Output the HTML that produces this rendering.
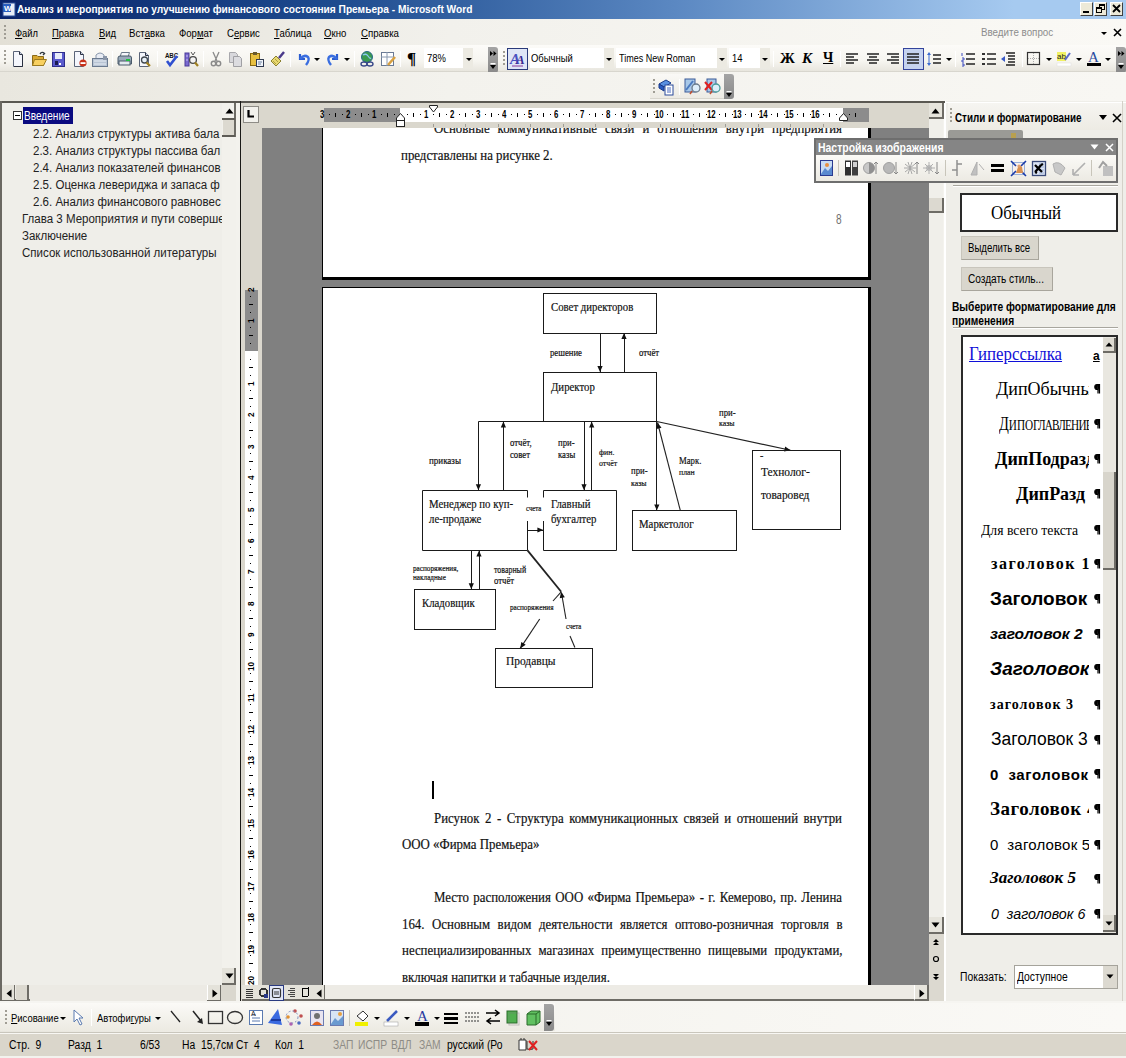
<!DOCTYPE html>
<html><head><meta charset="utf-8">
<style>
*{margin:0;padding:0;box-sizing:border-box}
html,body{width:1126px;height:1058px;overflow:hidden;background:#F4F3EE;font-family:"Liberation Sans",sans-serif;font-size:11px;color:#000}
.a{position:absolute}
.n{white-space:nowrap;transform-origin:0 0;line-height:1}
.s86{transform:scaleX(.86)}
.ser{font-family:"Liberation Serif",serif}
svg{position:absolute;overflow:visible}
.title{left:0;top:0;width:1126px;height:19px;background:linear-gradient(90deg,#0A246A 0%,#1E4C8F 30%,#5B88C2 60%,#A6CAF0 90%,#A6CAF0 100%)}
.menubar{left:0;top:19px;width:1126px;height:26px;background:linear-gradient(90deg,#E3E0D6 0%,#F2F1EC 40%,#FAF9F5 100%)}
.tb1{left:0;top:45px;width:1126px;height:27px;background:linear-gradient(#FCFBF8 0%,#F6F5F0 60%,#E6E4DC 100%)}
.row2{left:0;top:72px;width:1126px;height:29px;background:linear-gradient(90deg,#E9E7DF 0%,#F3F2ED 40%,#F8F7F3 100%)}
.grip{width:2px;height:14px;background:repeating-linear-gradient(#A09D94 0 2px,transparent 2px 4px)}
.vsep{width:1px;background:#C8C5BA;border-right:1px solid #fff}
.dd{width:0;height:0;border-left:3px solid transparent;border-right:3px solid transparent;border-top:3px solid #000}
.chev{background:linear-gradient(#A4A4A4,#8A8A8A);border-radius:0 3px 3px 0}
.combo{background:#fff;height:20px}
.cbtn{background:#ECEAE2;width:10px;height:20px}
</style></head><body>
<!-- TITLE BAR -->
<div class="a title"></div>
<svg style="left:2px;top:2px" width="15" height="15" viewBox="0 0 15 15"><rect x="1" y="1" width="12" height="13" fill="#E8EEF8" stroke="#2A4E9A"/><rect x="1" y="2" width="8" height="8" fill="#2A5FBF"/><text x="2" y="9" font-size="8" font-weight="bold" fill="#fff" font-family="Liberation Sans">W</text></svg>
<div class="a n" style="left:17px;top:4px;color:#fff;font-weight:bold;font-size:11px;transform:scaleX(.925)">Анализ и мероприятия по улучшению финансового состояния Премьера - Microsoft Word</div>
<!-- window buttons -->
<div class="a" style="left:1080px;top:2px;width:13px;height:14px;background:#ECE9D8;border:1px solid;border-color:#fff #404040 #404040 #fff"></div>
<div class="a" style="left:1083px;top:11px;width:6px;height:2px;background:#000"></div>
<div class="a" style="left:1094px;top:2px;width:13px;height:14px;background:#ECE9D8;border:1px solid;border-color:#fff #404040 #404040 #fff"></div>
<div class="a" style="left:1099px;top:4px;width:6px;height:6px;border:1px solid #000;border-top-width:2px"></div>
<div class="a" style="left:1096px;top:7px;width:6px;height:6px;border:1px solid #000;border-top-width:2px;background:#ECE9D8"></div>
<div class="a" style="left:1110px;top:2px;width:13px;height:14px;background:#ECE9D8;border:1px solid;border-color:#fff #404040 #404040 #fff"></div>
<svg style="left:1112px;top:4px" width="9" height="9"><path d="M1 1L8 8M8 1L1 8" stroke="#000" stroke-width="1.8"/></svg>
<!-- MENU BAR -->
<div class="a menubar"></div>
<div class="a grip" style="left:4px;top:25px;height:14px"></div>
<div class="a n" style="left:15px;top:28px;transform:scaleX(.85)"><u>Ф</u>айл</div>
<div class="a n" style="left:52px;top:28px;transform:scaleX(.86)"><u>П</u>равка</div>
<div class="a n" style="left:99px;top:28px;transform:scaleX(.86)"><u>В</u>ид</div>
<div class="a n" style="left:129px;top:28px;transform:scaleX(.88)">Вст<u>а</u>вка</div>
<div class="a n" style="left:179px;top:28px;transform:scaleX(.87)">Фор<u>м</u>ат</div>
<div class="a n" style="left:227px;top:28px;transform:scaleX(.87)">С<u>е</u>рвис</div>
<div class="a n" style="left:274px;top:28px;transform:scaleX(.87)"><u>Т</u>аблица</div>
<div class="a n" style="left:324px;top:28px;transform:scaleX(.87)"><u>О</u>кно</div>
<div class="a n" style="left:361px;top:28px;transform:scaleX(.88)"><u>С</u>правка</div>
<div class="a n" style="left:981px;top:27px;color:#8C8C8C;transform:scaleX(.89)">Введите вопрос</div>
<div class="a dd" style="left:1101px;top:32px"></div>
<svg style="left:1113px;top:28px" width="9" height="9"><path d="M1 1L8 8M8 1L1 8" stroke="#000" stroke-width="1.6"/></svg>
<!-- TOOLBAR ROW 1 -->
<div class="a tb1"></div>
<div class="a" style="left:0;top:71px;width:1126px;height:1px;background:#D8D6CE"></div>
<div class="a grip" style="left:4px;top:50px;height:16px"></div>
<svg style="left:12px;top:51px" width="16" height="16"><path d="M1.5 .5H7.5L10.5 3.5V15.5H1.5Z" fill="#F4F6FC" stroke="#5A6478"/><path d="M7.5 .5V3.5H10.5" fill="#C8D0E0" stroke="#2A3040"/><path d="M10.5 4V15.5H2" stroke="#2A3040" fill="none"/></svg>
<svg style="left:31px;top:51px" width="17" height="16"><path d="M1.5 4.5H6L7 5.5H12.5V14.5H1.5Z" fill="#D8A830" stroke="#8A6A18"/><path d="M3.5 8.5H15.5L12.5 14.5H1.5Z" fill="#F8D060" stroke="#9A7A20"/><path d="M9 3Q11 0 13.5 2.5L12 4" stroke="#303840" fill="none" stroke-width="1.4"/></svg>
<svg style="left:52px;top:51px" width="14" height="16"><rect x=".5" y="1.5" width="12" height="14" fill="#5A5ACC" stroke="#2E2E8A"/><rect x="3" y="2" width="7" height="6" fill="#E8ECFA"/><rect x="3" y="10" width="3" height="4" fill="#1A1A50"/><rect x="7" y="12" width="2" height="2" fill="#fff"/></svg>
<svg style="left:73px;top:51px" width="15" height="16"><path d="M1.5 .5H7.5L10.5 3.5V15.5H1.5Z" fill="#F4F6FC" stroke="#5A6478"/><path d="M7.5 .5V3.5H10.5" fill="#C8D0E0" stroke="#2A3040"/><circle cx="10" cy="12" r="3.6" fill="#C83018"/><rect x="7.5" y="11.2" width="5" height="1.8" fill="#fff"/></svg>
<svg style="left:92px;top:51px" width="16" height="16"><path d="M4 7V4Q8 0 12 4V7" fill="#E8ECF4" stroke="#8A98AC"/><rect x=".5" y="7.5" width="15" height="8" fill="#B8C4D4" stroke="#6A7A90"/><path d="M2 10H14M2 13H14" stroke="#E8EEF6"/><rect x="11" y="5" width="4" height="4" fill="#8A96A8"/></svg>
<div class="a vsep" style="left:112px;top:51px;height:16px"></div>
<svg style="left:117px;top:51px" width="15" height="16"><path d="M4.5 1.5H12.5L11 6H3Z" fill="#F4F6FA" stroke="#6A7888"/><path d="M1 7Q1 5 3 5H13Q14.5 5 14.5 7V13H1Z" fill="#9AAABA" stroke="#4A5A6A"/><rect x="2" y="10" width="11" height="4" fill="#E4EAF0" stroke="#4A5A6A"/><rect x="9" y="8" width="4" height="2" fill="#20C040"/></svg>
<div class="a vsep" style="left:157px;top:51px;height:16px"></div>
<svg style="left:138px;top:51px" width="15" height="16"><path d="M1.5 1.5H7.5L10.5 4.5V15.5H1.5Z" fill="#F4F6FC" stroke="#5A6478"/><path d="M7.5 1.5V4.5H10.5" fill="#C8D0E0" stroke="#2A3040"/><circle cx="6.5" cy="9" r="3" fill="#E8F0F8" stroke="#404850" stroke-width="1.3"/><path d="M8.5 11.5L12 15" stroke="#A08020" stroke-width="2.2"/></svg>
<svg style="left:163px;top:51px" width="16" height="16"><text x="2" y="7" font-size="6.5" font-weight="bold" font-family="Liberation Sans" fill="#111" transform="scale(.95 1)">ABC</text><path d="M4 10L7 14L14 5" stroke="#3050D0" stroke-width="2.6" fill="none"/></svg>
<svg style="left:184px;top:51px" width="15" height="16"><rect x="1" y="2" width="4" height="13" fill="#7A6AD0" stroke="#4A3A98"/><path d="M2 5H4M2 9H4" stroke="#C8C0F0"/><circle cx="9" cy="9" r="3.4" fill="#F4F4F4" stroke="#4A4A4A" stroke-width="1.3"/><path d="M11 11.5L14 15" stroke="#A08020" stroke-width="2.2"/><path d="M7 1L9 4L11 1" stroke="#555" fill="none"/></svg>
<div class="a vsep" style="left:203px;top:51px;height:16px"></div>
<svg style="left:209px;top:51px" width="14" height="16"><path d="M4 1L8 10M10 1L6 10" stroke="#8A8A8A" stroke-width="1.3"/><circle cx="4.5" cy="12.5" r="2.2" fill="none" stroke="#8A8A8A" stroke-width="1.4"/><circle cx="9.5" cy="12.5" r="2.2" fill="none" stroke="#8A8A8A" stroke-width="1.4"/></svg>
<svg style="left:228px;top:51px" width="16" height="16"><path d="M1.5 1.5H7.5L9.5 3.5V11.5H1.5Z" fill="#D8D8DC" stroke="#A8A8AC"/><path d="M5.5 5.5H11.5L13.5 7.5V15.5H5.5Z" fill="#DCDCE0" stroke="#A0A0A4"/></svg>
<svg style="left:249px;top:51px" width="16" height="16"><rect x="1.5" y="2.5" width="9" height="12" fill="#E8C040" stroke="#8A6A10"/><rect x="4" y="1" width="4" height="3" fill="#6A5A30"/><rect x="7.5" y="8.5" width="7" height="7" fill="#F0F4FA" stroke="#303A50"/><path d="M9 11H13M9 13H12" stroke="#6A80A0"/></svg>
<svg style="left:270px;top:51px" width="16" height="16"><path d="M9 7L14 1" stroke="#4A3A8A" stroke-width="2.5"/><path d="M6 5L11 10L6 15L1 10Z" fill="#E8D870" stroke="#8A8030"/><path d="M3 10L6 13M5 8L8 11" stroke="#B0A040"/></svg>
<div class="a vsep" style="left:290px;top:51px;height:16px"></div>
<svg style="left:296px;top:51px" width="16" height="16"><path d="M4 3V8H9" fill="none" stroke="#2A5CD0" stroke-width="2.2"/><path d="M4 8Q8 3 12 6Q14 9 10 14" fill="none" stroke="#3A6EE0" stroke-width="2.4"/></svg>
<div class="a dd" style="left:314px;top:58px"></div>
<svg style="left:325px;top:51px" width="16" height="16"><path d="M12 3V8H7" fill="none" stroke="#2A5CD0" stroke-width="2.2"/><path d="M12 8Q8 3 4 6Q2 9 6 14" fill="none" stroke="#3A6EE0" stroke-width="2.4"/></svg>
<div class="a dd" style="left:344px;top:58px"></div>
<div class="a vsep" style="left:354px;top:51px;height:16px"></div>
<svg style="left:359px;top:51px" width="16" height="16"><circle cx="8" cy="6" r="5.5" fill="#3A9A50" stroke="#2A6A8A"/><path d="M4 4Q7 2 9 5T12 7" fill="none" stroke="#8AC8F0" stroke-width="1.3"/><ellipse cx="5" cy="13" rx="3" ry="2" fill="none" stroke="#3A4A8A" stroke-width="1.4"/><ellipse cx="11" cy="13" rx="3" ry="2" fill="none" stroke="#3A4A8A" stroke-width="1.4"/></svg>
<svg style="left:380px;top:51px" width="16" height="16"><rect x="1.5" y="1.5" width="12" height="13" fill="#fff" stroke="#6A7A94"/><path d="M1 6H14M7 1V15" stroke="#8A9AB0"/><path d="M8 14L15 6" stroke="#D8A040" stroke-width="2.5"/></svg>
<div class="a vsep" style="left:400px;top:51px;height:16px"></div>
<div class="a n ser" style="left:407px;top:50px;font-size:17px;font-weight:bold">¶</div>
<div class="a combo" style="left:424px;top:48px;width:49px"></div>
<div class="a n" style="left:427px;top:53px;transform:scaleX(.86)">78%</div>
<div class="a cbtn" style="left:463px;top:48px"></div>
<div class="a dd" style="left:466px;top:58px"></div>
<div class="a chev" style="left:488px;top:47px;width:10px;height:26px"></div>
<svg style="left:489px;top:49px" width="9" height="22"><path d="M1 2L4 4.5L1 7ZM4.5 2L7.5 4.5L4.5 7Z" fill="#000"/><rect x="1.5" y="14" width="5" height="1.5" fill="#fff"/><path d="M1 16H7L4 20Z" fill="#000"/></svg>
<div class="a grip" style="left:503px;top:51px;height:16px"></div>
<div class="a" style="left:507px;top:48px;width:21px;height:22px;background:#DFE6F6;border:1px solid #2A3A7A"></div>
<svg style="left:509px;top:50px" width="17" height="17"><text x="1" y="14" font-size="15" font-weight="bold" font-style="italic" font-family="Liberation Serif" fill="#4A50C0">A</text><text x="7" y="14" font-size="13" font-weight="bold" font-style="italic" font-family="Liberation Serif" fill="#3A2A90">A</text><path d="M3 16H14" stroke="#8A3A9A"/></svg>
<div class="a combo" style="left:530px;top:48px;width:84px"></div>
<div class="a n" style="left:531px;top:53px;transform:scaleX(.86)">Обычный</div>
<div class="a cbtn" style="left:604px;top:48px"></div>
<div class="a dd" style="left:606px;top:58px"></div>
<div class="a combo" style="left:616px;top:48px;width:111px"></div>
<div class="a n" style="left:619px;top:53px;transform:scaleX(.82)">Times New Roman</div>
<div class="a cbtn" style="left:717px;top:48px"></div>
<div class="a dd" style="left:719px;top:58px"></div>
<div class="a combo" style="left:729px;top:48px;width:41px"></div>
<div class="a n" style="left:732px;top:53px;transform:scaleX(.86)">14</div>
<div class="a cbtn" style="left:760px;top:48px"></div>
<div class="a dd" style="left:762px;top:58px"></div>
<div class="a vsep" style="left:773px;top:51px;height:16px"></div>
<div class="a n ser" style="left:780px;top:51px;font-size:15px;font-weight:bold">Ж</div>
<div class="a n ser" style="left:802px;top:51px;font-size:15px;font-weight:bold;font-style:italic">К</div>
<div class="a n ser" style="left:823px;top:51px;font-size:14px;font-weight:bold;text-decoration:underline">Ч</div>
<div class="a vsep" style="left:840px;top:51px;height:16px"></div>
<svg style="left:845px;top:52px" width="15" height="14"><path d="M1 2H13M1 5H9M1 8H13M1 11H9" stroke="#222" stroke-width="1.6"/></svg>
<svg style="left:866px;top:52px" width="15" height="14"><path d="M1 2H13M3 5H11M1 8H13M3 11H11" stroke="#222" stroke-width="1.6"/></svg>
<svg style="left:886px;top:52px" width="15" height="14"><path d="M1 2H13M5 5H13M1 8H13M5 11H13" stroke="#222" stroke-width="1.6"/></svg>
<div class="a" style="left:903px;top:48px;width:21px;height:22px;background:#C6D3EF;border:1px solid #33449C"></div>
<svg style="left:906px;top:52px" width="15" height="14"><path d="M1 2H13M1 5H13M1 8H13M1 11H13" stroke="#222" stroke-width="1.6"/></svg>
<svg style="left:926px;top:51px" width="17" height="16"><path d="M3 1L1 4H5ZM3 15L1 12H5Z" fill="#3A6AD0"/><path d="M3 3V13" stroke="#3A6AD0"/><path d="M7 4H15M7 8H15M7 12H15" stroke="#222" stroke-width="1.6"/></svg>
<div class="a dd" style="left:946px;top:58px"></div>
<div class="a vsep" style="left:955px;top:51px;height:16px"></div>
<svg style="left:960px;top:51px" width="16" height="16"><path d="M2 2V5M2 7H4V9H2V11H4M2 13H4V15H2" stroke="#3A4AC0" fill="none"/><path d="M6 3H15M6 8H15M6 13H15" stroke="#222" stroke-width="1.6"/></svg>
<svg style="left:981px;top:51px" width="16" height="16"><rect x="1" y="2" width="3" height="2" fill="#333"/><rect x="1" y="7" width="3" height="2" fill="#333"/><rect x="1" y="12" width="3" height="2" fill="#333"/><path d="M6 3H15M6 8H15M6 13H15" stroke="#222" stroke-width="1.6"/></svg>
<svg style="left:1000px;top:51px" width="16" height="16"><path d="M6 2H15M8 5H15M8 8H15M8 11H15M6 14H15" stroke="#222" stroke-width="1.5"/><path d="M1 8L5 5V11Z" fill="#3A5AC8"/></svg>
<div class="a vsep" style="left:1022px;top:51px;height:16px"></div>
<svg style="left:1027px;top:52px" width="14" height="14"><rect x=".5" y=".5" width="12" height="12" fill="none" stroke="#333" stroke-width="1.2"/><path d="M6.5 1V13M1 6.5H13" stroke="#AAA" stroke-dasharray="1 1"/></svg>
<div class="a dd" style="left:1046px;top:58px"></div>
<svg style="left:1056px;top:50px" width="16" height="18"><rect x="1" y="2" width="9" height="9" fill="#F0F040" opacity=".8"/><text x="1" y="9" font-size="8" font-family="Liberation Sans" fill="#222">ab</text><path d="M9 10L14 3" stroke="#5A6AC8" stroke-width="2"/><rect x="1" y="13" width="14" height="3" fill="#fff" stroke="#ddd" stroke-width=".5"/></svg>
<div class="a dd" style="left:1076px;top:58px"></div>
<svg style="left:1086px;top:50px" width="16" height="18"><text x="2" y="12" font-size="15" font-family="Liberation Serif" fill="#2A4AA0">A</text><rect x="1" y="13" width="14" height="3" fill="#000"/></svg>
<div class="a dd" style="left:1105px;top:58px"></div>
<div class="a chev" style="left:1116px;top:47px;width:10px;height:26px"></div>
<svg style="left:1117px;top:49px" width="9" height="22"><path d="M1 2L4 4.5L1 7ZM4.5 2L7.5 4.5L4.5 7Z" fill="#000"/><rect x="1.5" y="14" width="5" height="1.5" fill="#fff"/><path d="M1 16H7L4 20Z" fill="#000"/></svg>

<!-- ROW 2 -->
<div class="a row2"></div>
<div class="a" style="left:650px;top:74px;width:76px;height:25px;background:linear-gradient(#FAF9F6,#EDEBE4);border-bottom:1px solid #D8D6CE"></div>
<div class="a grip" style="left:653px;top:79px;height:14px"></div>
<svg style="left:658px;top:78px" width="16" height="18"><path d="M1 6L8 2L13 5L6 9Z" fill="#5A90E0" stroke="#1A3A8A"/><path d="M1 6V10L6 13V9Z" fill="#2A5AC0" stroke="#1A3A8A"/><rect x="7" y="7" width="8" height="10" fill="#fff" stroke="#2A4A9A"/><path d="M9 10H13M9 12H13M9 14H13" stroke="#4A6AC0"/></svg>
<div class="a vsep" style="left:679px;top:79px;height:16px"></div>
<svg style="left:684px;top:78px" width="17" height="18"><rect x="1" y="1" width="10" height="13" fill="#A8C8E8" stroke="#3A5A98"/><path d="M2 12L9 3" stroke="#4A7AC0" stroke-width="2"/><circle cx="12" cy="10" r="4" fill="#DDEEFA" stroke="#6A7A8A" stroke-width="1.3"/><path d="M6 16L8 13" stroke="#C05030" stroke-width="1.5"/></svg>
<svg style="left:704px;top:78px" width="17" height="18"><rect x="3" y="1" width="9" height="13" fill="#A8C8E8" stroke="#3A5A98"/><path d="M1 4L8 12M8 4L1 12" stroke="#E02020" stroke-width="2"/><circle cx="12" cy="10" r="4" fill="#DDEEFA" stroke="#4A9A9A" stroke-width="1.3"/><path d="M6 16L8 13" stroke="#C05030" stroke-width="1.5"/></svg>
<div class="a chev" style="left:724px;top:74px;width:10px;height:25px"></div>
<svg style="left:725px;top:76px" width="9" height="22"><rect x="1.5" y="15" width="5" height="1" fill="#fff"/><path d="M1 17H7L4 21Z" fill="#000"/></svg>

<!-- PANE FRAME -->
<div class="a" style="left:0;top:101px;width:945px;height:2px;background:#5A5852"></div>
<div class="a" style="left:0;top:103px;width:236px;height:898px;background:#EFEEE9"></div>
<div class="a" style="left:0;top:101px;width:2px;height:900px;background:#6A6862"></div>
<div class="a" style="left:236px;top:103px;width:4px;height:898px;background:#F3F2ED"></div>
<div class="a" style="left:240px;top:101px;width:1px;height:900px;background:#1A1916"></div><div class="a" style="left:241px;top:103px;width:1px;height:898px;background:#DCD9D0"></div>
<!-- left pane scrollbar -->
<div class="a" style="left:222px;top:103px;width:14px;height:882px;background:#F2F1EC"></div>
<div class="a" style="left:234px;top:103px;width:2px;height:34px;background:#6E6C66"></div>
<svg style="left:225px;top:108px" width="9" height="6"><path d="M0.5 5.5L4.5 0.5L8.5 5.5Z" fill="#000"/></svg>
<div class="a" style="left:222px;top:118px;width:13px;height:2px;background:#5E5C56"></div>
<div class="a" style="left:223px;top:120px;width:11px;height:16px;background:#DCD9D0"></div>
<div class="a" style="left:222px;top:135px;width:13px;height:2px;background:#5E5C56"></div>
<div class="a" style="left:222px;top:968px;width:14px;height:17px;background:#E4E2DA;border-right:2px solid #6E6C66;border-bottom:2px solid #6E6C66"></div>
<svg style="left:225px;top:973px" width="9" height="6"><path d="M0.5 .5L4.5 5.5L8.5 .5Z" fill="#000"/></svg>
<!-- left pane h scrollbar -->
<div class="a" style="left:2px;top:985px;width:234px;height:16px;background:#ECEAE4"></div>
<div class="a" style="left:2px;top:999px;width:28px;height:2px;background:#6E6C66"></div><div class="a" style="left:207px;top:999px;width:15px;height:2px;background:#6E6C66"></div>
<div class="a" style="left:2px;top:985px;width:13px;height:15px;background:#E4E2DA;border-right:1px solid #6E6C66"></div>
<svg style="left:6px;top:989px" width="6" height="9"><path d="M5.5 .5L.5 4.5L5.5 8.5Z" fill="#000"/></svg>
<div class="a" style="left:16px;top:985px;width:13px;height:15px;background:#DCD9D0;border-right:2px solid #6E6C66"></div>
<div class="a" style="left:207px;top:985px;width:15px;height:15px;background:#E4E2DA;border-left:1px solid #fff;border-right:2px solid #6E6C66"></div>
<svg style="left:212px;top:989px" width="6" height="9"><path d="M.5 .5L5.5 4.5L.5 8.5Z" fill="#000"/></svg>
<div class="a" style="left:221px;top:985px;width:15px;height:16px;background:#DAD7CE"></div>
<!-- document map text -->
<div class="a" style="left:13px;top:111px;width:9px;height:9px;border:1px solid #333;background:#fff"></div>
<div class="a" style="left:15px;top:115px;width:5px;height:1px;background:#000"></div>
<div class="a" style="left:23px;top:107px;width:50px;height:17px;background:#0A0A80"></div>
<div class="a n" style="left:24px;top:110px;font-size:12px;color:#fff;transform:scaleX(.84)">Введение</div>
<div class="a" style="left:20px;top:126px;width:202px;height:140px;overflow:hidden">
<div class="a n" style="left:13px;top:2px;font-size:12px;color:#222;transform:scaleX(.96)">2.2. Анализ структуры актива бала</div>
<div class="a n" style="left:13px;top:19px;font-size:12px;color:#222;transform:scaleX(.96)">2.3. Анализ структуры пассива бал</div>
<div class="a n" style="left:13px;top:36px;font-size:12px;color:#222;transform:scaleX(.96)">2.4. Анализ показателей финансов</div>
<div class="a n" style="left:13px;top:53px;font-size:12px;color:#222;transform:scaleX(.96)">2.5. Оценка левериджа и запаса ф</div>
<div class="a n" style="left:13px;top:70px;font-size:12px;color:#222;transform:scaleX(.96)">2.6. Анализ финансового равновес</div>
<div class="a n" style="left:2px;top:87px;font-size:12px;color:#222;transform:scaleX(.96)">Глава 3 Мероприятия и пути соверше</div>
<div class="a n" style="left:2px;top:104px;font-size:12px;color:#222;transform:scaleX(.96)">Заключение</div>
<div class="a n" style="left:2px;top:121px;font-size:12px;color:#222;transform:scaleX(.96)">Список использованной литературы</div>
</div>
<!-- ruler corner tab selector -->
<div class="a" style="left:242px;top:103px;width:20px;height:25px;background:#DAD7CD"></div>
<!-- DOC AREA -->
<div class="a" style="left:262px;top:128px;width:667px;height:857px;background:#808080"></div>
<!-- page 1 -->
<div class="a" style="left:322px;top:128px;width:549px;height:152px;background:#000"></div>
<div class="a" style="left:323px;top:128px;width:545px;height:149px;background:#fff"></div>
<!-- page 2 -->
<div class="a" style="left:322px;top:287px;width:549px;height:698px;background:#000"></div>
<div class="a" style="left:323px;top:288px;width:545px;height:697px;background:#fff"></div>
<!--PAGESTART--><div class="a" style="left:323px;top:128px;width:545px;height:149px;overflow:hidden">
<div class="a ser" style="left:111px;top:-6.6px;width:476.1px;font-size:15px;line-height:15px;height:15px;color:#111;-webkit-text-stroke:.2px #111;text-align:justify;text-align-last:justify;white-space:nowrap;transform:scaleX(0.857);transform-origin:0 0;">Основные&nbsp; коммуникативные&nbsp; связи&nbsp; и&nbsp; отношения&nbsp; внутри&nbsp; предприятия</div>
<div class="a ser n" style="left:78px;top:20.3px;font-size:15px;line-height:15px;color:#111;-webkit-text-stroke:.2px #111;transform:scaleX(0.857);">представлены на рисунке 2.</div>
<div class="a n" style="left:513px;top:84px;font-size:14px;line-height:14px;color:#707070;transform:scaleX(.72)">8</div>
</div>
<div class="a ser" style="left:434px;top:810.6px;width:476.1px;font-size:15px;line-height:15px;height:15px;color:#111;-webkit-text-stroke:.2px #111;text-align:justify;text-align-last:justify;white-space:nowrap;transform:scaleX(0.857);transform-origin:0 0;">Рисунок 2 - Структура коммуникационных связей и отношений внутри</div>
<div class="a ser n" style="left:401.5px;top:837.2px;font-size:15px;line-height:15px;color:#111;-webkit-text-stroke:.2px #111;transform:scaleX(0.857);">ООО «Фирма Премьера»</div>
<div class="a ser" style="left:434px;top:890.0px;width:476.1px;font-size:15px;line-height:15px;height:15px;color:#111;-webkit-text-stroke:.2px #111;text-align:justify;text-align-last:justify;white-space:nowrap;transform:scaleX(0.857);transform-origin:0 0;">Место расположения ООО «Фирма Премьера» - г. Кемерово, пр. Ленина</div>
<div class="a ser" style="left:401.5px;top:916.6px;width:514.0px;font-size:15px;line-height:15px;height:15px;color:#111;-webkit-text-stroke:.2px #111;text-align:justify;text-align-last:justify;white-space:nowrap;transform:scaleX(0.857);transform-origin:0 0;">164.&nbsp; Основным&nbsp; видом&nbsp; деятельности&nbsp; является&nbsp; оптово-розничная&nbsp; торговля&nbsp; в</div>
<div class="a ser" style="left:401.5px;top:942.9px;width:514.0px;font-size:15px;line-height:15px;height:15px;color:#111;-webkit-text-stroke:.2px #111;text-align:justify;text-align-last:justify;white-space:nowrap;transform:scaleX(0.857);transform-origin:0 0;">неспециализированных&nbsp; магазинах&nbsp; преимущественно&nbsp; пищевыми&nbsp; продуктами,</div>
<div class="a ser n" style="left:401.5px;top:969.6px;font-size:15px;line-height:15px;color:#111;-webkit-text-stroke:.2px #111;transform:scaleX(0.857);">включая напитки и табачные изделия.</div>
<div class="a" style="left:432px;top:781px;width:2px;height:18px;background:#000"></div>
<svg style="left:0;top:0" width="1126" height="1058"><rect x="543.5" y="293.5" width="113.0" height="40.0" fill="none" stroke="#1A1A1A" stroke-width="1"/><path d="M600.5 333.5L600.5 372.5" stroke="#1A1A1A" stroke-width="1" fill="none"/><path d="M600.0 372.0L597.4 366.0L602.6 366.0Z" fill="#111"/><path d="M624.5 372.5L624.5 333.5" stroke="#1A1A1A" stroke-width="1" fill="none"/><path d="M624.0 333.0L626.6 339.0L621.4 339.0Z" fill="#111"/><rect x="543.5" y="372.5" width="113.0" height="49.0" fill="none" stroke="#1A1A1A" stroke-width="1"/><path d="M478.5 421.5L656.5 421.5" stroke="#1A1A1A" stroke-width="1" fill="none"/><path d="M478.5 421.5L478.5 490.5" stroke="#1A1A1A" stroke-width="1" fill="none"/><path d="M478.4 490.3L475.8 484.3L481.0 484.3Z" fill="#111"/><path d="M503.5 490.5L503.5 421.5" stroke="#1A1A1A" stroke-width="1" fill="none"/><path d="M503.4 421.5L506.0 427.5L500.8 427.5Z" fill="#111"/><path d="M584.5 421.5L584.5 490.5" stroke="#1A1A1A" stroke-width="1" fill="none"/><path d="M584.0 490.3L581.4 484.3L586.6 484.3Z" fill="#111"/><path d="M591.5 490.5L591.5 421.5" stroke="#1A1A1A" stroke-width="1" fill="none"/><path d="M591.7 421.5L594.3 427.5L589.1 427.5Z" fill="#111"/><path d="M656.5 421.5L656.5 510.5" stroke="#1A1A1A" stroke-width="1" fill="none"/><path d="M656.8 510.4L654.2 504.4L659.4 504.4Z" fill="#111"/><path d="M680.3 510.4L657.5 422.5" stroke="#222" stroke-width="1.1" fill="none"/><path d="M657.5 422.5L661.5 427.7L656.5 429.0Z" fill="#111"/><path d="M656.8 421.5L790.5 450.3" stroke="#222" stroke-width="1.1" fill="none"/><path d="M790.5 450.3L784.1 451.6L785.2 446.5Z" fill="#111"/><path d="M527.5 497.5V490.5H422.5V550.5H527.5V521" stroke="#1A1A1A" stroke-width="1" fill="none"/><path d="M543.5 497.5V490.5H616.5V550.5H543.5V521" stroke="#1A1A1A" stroke-width="1" fill="none"/><path d="M527.5 530.5L543.5 530.5" stroke="#1A1A1A" stroke-width="1" fill="none"/><path d="M543.4 530.0L537.4 532.6L537.4 527.4Z" fill="#111"/><rect x="632.5" y="510.5" width="104.0" height="40.0" fill="none" stroke="#1A1A1A" stroke-width="1"/><rect x="752.5" y="450.5" width="88.0" height="79.0" fill="none" stroke="#1A1A1A" stroke-width="1"/><path d="M471.5 550.5L471.5 589.5" stroke="#1A1A1A" stroke-width="1" fill="none"/><path d="M471.3 589.2L468.7 583.2L473.9 583.2Z" fill="#111"/><path d="M479.5 589.5L479.5 550.5" stroke="#1A1A1A" stroke-width="1" fill="none"/><path d="M479.0 550.4L481.6 556.4L476.4 556.4Z" fill="#111"/><rect x="414.5" y="589.5" width="81.0" height="40.0" fill="none" stroke="#1A1A1A" stroke-width="1"/><path d="M527.5 550.4L561.2 591.8" stroke="#222" stroke-width="1.8" fill="none"/><path d="M574.9 647.5L570 636" stroke="#222" stroke-width="1.1" fill="none"/><path d="M566 619L561.5 593" stroke="#222" stroke-width="1.1" fill="none"/><path d="M561.2 591.8L564.8 597.3L559.7 598.2Z" fill="#111"/><path d="M561.2 591.8L553 601" stroke="#222" stroke-width="1.1" fill="none"/><path d="M539.7 619L520.2 648.4" stroke="#222" stroke-width="1.1" fill="none"/><path d="M520.2 648.4L521.3 642.0L525.7 644.8Z" fill="#111"/><rect x="495.5" y="648.5" width="97.0" height="39.0" fill="none" stroke="#1A1A1A" stroke-width="1"/></svg>
<div class="a ser n" style="left:550.6px;top:299.5px;font-size:13px;line-height:13px;color:#111;-webkit-text-stroke:.2px #111;transform:scaleX(0.83);">Совет директоров</div>
<div class="a ser n" style="left:550.6px;top:379.6px;font-size:13px;line-height:13px;color:#111;-webkit-text-stroke:.2px #111;transform:scaleX(0.83);">Директор</div>
<div class="a ser n" style="left:429px;top:496.6px;font-size:13px;line-height:13px;color:#111;-webkit-text-stroke:.2px #111;transform:scaleX(0.83);">Менеджер по куп-</div>
<div class="a ser n" style="left:429px;top:512.1px;font-size:13px;line-height:13px;color:#111;-webkit-text-stroke:.2px #111;transform:scaleX(0.83);">ле-продаже</div>
<div class="a ser n" style="left:551px;top:496.6px;font-size:13px;line-height:13px;color:#111;-webkit-text-stroke:.2px #111;transform:scaleX(0.83);">Главный</div>
<div class="a ser n" style="left:551px;top:512.1px;font-size:13px;line-height:13px;color:#111;-webkit-text-stroke:.2px #111;transform:scaleX(0.83);">бухгалтер</div>
<div class="a ser n" style="left:639px;top:516.9px;font-size:13px;line-height:13px;color:#111;-webkit-text-stroke:.2px #111;transform:scaleX(0.83);">Маркетолог</div>
<div class="a ser n" style="left:761px;top:464.8px;font-size:13px;line-height:13px;color:#111;-webkit-text-stroke:.2px #111;transform:scaleX(0.88);">Технолог-</div>
<div class="a ser n" style="left:761px;top:488.3px;font-size:13px;line-height:13px;color:#111;-webkit-text-stroke:.2px #111;transform:scaleX(0.88);">товаровед</div>
<div class="a ser n" style="left:421.7px;top:595.5px;font-size:13px;line-height:13px;color:#111;-webkit-text-stroke:.2px #111;transform:scaleX(0.83);">Кладовщик</div>
<div class="a ser n" style="left:506px;top:654.1px;font-size:13px;line-height:13px;color:#111;-webkit-text-stroke:.2px #111;transform:scaleX(0.88);">Продавцы</div>
<div class="a ser n" style="left:760px;top:450.6px;font-size:10px;line-height:10px;color:#111;-webkit-text-stroke:.2px #111;transform:scaleX(1);">-</div>
<div class="a ser n" style="left:550px;top:347.6px;font-size:10px;line-height:10px;color:#111;-webkit-text-stroke:.2px #111;transform:scaleX(0.87);">решение</div>
<div class="a ser n" style="left:639px;top:347.6px;font-size:10px;line-height:10px;color:#111;-webkit-text-stroke:.2px #111;transform:scaleX(0.87);">отчёт</div>
<div class="a ser n" style="left:429px;top:456.1px;font-size:10px;line-height:10px;color:#111;-webkit-text-stroke:.2px #111;transform:scaleX(0.9);">приказы</div>
<div class="a ser n" style="left:509.6px;top:437.6px;font-size:10px;line-height:10px;color:#111;-webkit-text-stroke:.2px #111;transform:scaleX(0.87);">отчёт,</div>
<div class="a ser n" style="left:509.6px;top:450.2px;font-size:10px;line-height:10px;color:#111;-webkit-text-stroke:.2px #111;transform:scaleX(0.87);">совет</div>
<div class="a ser n" style="left:558px;top:437.6px;font-size:10px;line-height:10px;color:#111;-webkit-text-stroke:.2px #111;transform:scaleX(0.87);">при-</div>
<div class="a ser n" style="left:558px;top:450.2px;font-size:10px;line-height:10px;color:#111;-webkit-text-stroke:.2px #111;transform:scaleX(0.87);">казы</div>
<div class="a ser n" style="left:598.6px;top:448.2px;font-size:9px;line-height:9px;color:#111;-webkit-text-stroke:.2px #111;transform:scaleX(0.87);">фин.</div>
<div class="a ser n" style="left:598.6px;top:458.9px;font-size:9px;line-height:9px;color:#111;-webkit-text-stroke:.2px #111;transform:scaleX(0.87);">отчёт</div>
<div class="a ser n" style="left:719px;top:408.0px;font-size:10px;line-height:10px;color:#111;-webkit-text-stroke:.2px #111;transform:scaleX(0.87);">при-</div>
<div class="a ser n" style="left:719px;top:419.2px;font-size:9px;line-height:9px;color:#111;-webkit-text-stroke:.2px #111;transform:scaleX(0.87);">казы</div>
<div class="a ser n" style="left:630.6px;top:466.2px;font-size:10px;line-height:10px;color:#111;-webkit-text-stroke:.2px #111;transform:scaleX(0.87);">при-</div>
<div class="a ser n" style="left:630.6px;top:478.5px;font-size:9px;line-height:9px;color:#111;-webkit-text-stroke:.2px #111;transform:scaleX(0.87);">казы</div>
<div class="a ser n" style="left:679px;top:456.0px;font-size:10px;line-height:10px;color:#111;-webkit-text-stroke:.2px #111;transform:scaleX(0.87);">Марк.</div>
<div class="a ser n" style="left:679px;top:468.2px;font-size:9px;line-height:9px;color:#111;-webkit-text-stroke:.2px #111;transform:scaleX(0.87);">план</div>
<div class="a ser n" style="left:413px;top:565.3px;font-size:8px;line-height:8px;color:#111;-webkit-text-stroke:.2px #111;transform:scaleX(0.9);">распоряжения,</div>
<div class="a ser n" style="left:413px;top:574.3px;font-size:8px;line-height:8px;color:#111;-webkit-text-stroke:.2px #111;transform:scaleX(0.9);">накладные</div>
<div class="a ser n" style="left:494px;top:564.6px;font-size:10px;line-height:10px;color:#111;-webkit-text-stroke:.2px #111;transform:scaleX(0.79);">товарный</div>
<div class="a ser n" style="left:494px;top:575.6px;font-size:10px;line-height:10px;color:#111;-webkit-text-stroke:.2px #111;transform:scaleX(0.87);">отчёт</div>
<div class="a ser n" style="left:526px;top:505.3px;font-size:8px;line-height:8px;color:#111;-webkit-text-stroke:.2px #111;transform:scaleX(0.85);">счета</div>
<div class="a ser n" style="left:510px;top:603.6px;font-size:8px;line-height:8px;color:#111;-webkit-text-stroke:.2px #111;transform:scaleX(0.9);">распоряжения</div>
<div class="a ser n" style="left:566px;top:623.3px;font-size:8px;line-height:8px;color:#111;-webkit-text-stroke:.2px #111;transform:scaleX(0.85);">счета</div><!--PAGEEND-->
<div class="a" style="left:242px;top:103px;width:687px;height:25px;background:#DAD7CD"></div>
<div class="a" style="left:324px;top:108px;width:76px;height:14px;background:#8C8C8C"></div>
<div class="a" style="left:400px;top:108px;width:443px;height:14px;background:#fff"></div>
<div class="a" style="left:843px;top:108px;width:26px;height:14px;background:#8C8C8C"></div>
<div class="a n" style="left:319.8px;top:110px;font-size:10px;font-weight:bold;color:#000;transform:scaleX(.78)">3</div>
<div class="a" style="left:328.5px;top:114px;width:1px;height:1px;background:#000"></div>
<div class="a" style="left:335.0px;top:113px;width:1px;height:4px;background:#000"></div>
<div class="a" style="left:341.5px;top:114px;width:1px;height:1px;background:#000"></div>
<div class="a n" style="left:345.8px;top:110px;font-size:10px;font-weight:bold;color:#000;transform:scaleX(.78)">2</div>
<div class="a" style="left:354.5px;top:114px;width:1px;height:1px;background:#000"></div>
<div class="a" style="left:361.0px;top:113px;width:1px;height:4px;background:#000"></div>
<div class="a" style="left:367.5px;top:114px;width:1px;height:1px;background:#000"></div>
<div class="a n" style="left:371.8px;top:110px;font-size:10px;font-weight:bold;color:#000;transform:scaleX(.78)">1</div>
<div class="a" style="left:380.5px;top:114px;width:1px;height:1px;background:#000"></div>
<div class="a" style="left:387.0px;top:113px;width:1px;height:4px;background:#000"></div>
<div class="a" style="left:393.5px;top:114px;width:1px;height:1px;background:#000"></div>
<div class="a" style="left:406.5px;top:114px;width:1px;height:1px;background:#000"></div>
<div class="a" style="left:413.0px;top:113px;width:1px;height:4px;background:#000"></div>
<div class="a" style="left:419.5px;top:114px;width:1px;height:1px;background:#000"></div>
<div class="a n" style="left:423.8px;top:110px;font-size:10px;font-weight:bold;color:#000;transform:scaleX(.78)">1</div>
<div class="a" style="left:432.5px;top:114px;width:1px;height:1px;background:#000"></div>
<div class="a" style="left:439.0px;top:113px;width:1px;height:4px;background:#000"></div>
<div class="a" style="left:445.5px;top:114px;width:1px;height:1px;background:#000"></div>
<div class="a n" style="left:449.8px;top:110px;font-size:10px;font-weight:bold;color:#000;transform:scaleX(.78)">2</div>
<div class="a" style="left:458.5px;top:114px;width:1px;height:1px;background:#000"></div>
<div class="a" style="left:465.0px;top:113px;width:1px;height:4px;background:#000"></div>
<div class="a" style="left:471.5px;top:114px;width:1px;height:1px;background:#000"></div>
<div class="a n" style="left:475.8px;top:110px;font-size:10px;font-weight:bold;color:#000;transform:scaleX(.78)">3</div>
<div class="a" style="left:484.5px;top:114px;width:1px;height:1px;background:#000"></div>
<div class="a" style="left:491.0px;top:113px;width:1px;height:4px;background:#000"></div>
<div class="a" style="left:497.5px;top:114px;width:1px;height:1px;background:#000"></div>
<div class="a n" style="left:501.8px;top:110px;font-size:10px;font-weight:bold;color:#000;transform:scaleX(.78)">4</div>
<div class="a" style="left:510.5px;top:114px;width:1px;height:1px;background:#000"></div>
<div class="a" style="left:517.0px;top:113px;width:1px;height:4px;background:#000"></div>
<div class="a" style="left:523.5px;top:114px;width:1px;height:1px;background:#000"></div>
<div class="a n" style="left:527.8px;top:110px;font-size:10px;font-weight:bold;color:#000;transform:scaleX(.78)">5</div>
<div class="a" style="left:536.5px;top:114px;width:1px;height:1px;background:#000"></div>
<div class="a" style="left:543.0px;top:113px;width:1px;height:4px;background:#000"></div>
<div class="a" style="left:549.5px;top:114px;width:1px;height:1px;background:#000"></div>
<div class="a n" style="left:553.8px;top:110px;font-size:10px;font-weight:bold;color:#000;transform:scaleX(.78)">6</div>
<div class="a" style="left:562.5px;top:114px;width:1px;height:1px;background:#000"></div>
<div class="a" style="left:569.0px;top:113px;width:1px;height:4px;background:#000"></div>
<div class="a" style="left:575.5px;top:114px;width:1px;height:1px;background:#000"></div>
<div class="a n" style="left:579.8px;top:110px;font-size:10px;font-weight:bold;color:#000;transform:scaleX(.78)">7</div>
<div class="a" style="left:588.5px;top:114px;width:1px;height:1px;background:#000"></div>
<div class="a" style="left:595.0px;top:113px;width:1px;height:4px;background:#000"></div>
<div class="a" style="left:601.5px;top:114px;width:1px;height:1px;background:#000"></div>
<div class="a n" style="left:605.8px;top:110px;font-size:10px;font-weight:bold;color:#000;transform:scaleX(.78)">8</div>
<div class="a" style="left:614.5px;top:114px;width:1px;height:1px;background:#000"></div>
<div class="a" style="left:621.0px;top:113px;width:1px;height:4px;background:#000"></div>
<div class="a" style="left:627.5px;top:114px;width:1px;height:1px;background:#000"></div>
<div class="a n" style="left:631.8px;top:110px;font-size:10px;font-weight:bold;color:#000;transform:scaleX(.78)">9</div>
<div class="a" style="left:640.5px;top:114px;width:1px;height:1px;background:#000"></div>
<div class="a" style="left:647.0px;top:113px;width:1px;height:4px;background:#000"></div>
<div class="a" style="left:653.5px;top:114px;width:1px;height:1px;background:#000"></div>
<div class="a n" style="left:655.2px;top:110px;font-size:10px;font-weight:bold;color:#000;transform:scaleX(.78)">10</div>
<div class="a" style="left:666.5px;top:114px;width:1px;height:1px;background:#000"></div>
<div class="a" style="left:673.0px;top:113px;width:1px;height:4px;background:#000"></div>
<div class="a" style="left:679.5px;top:114px;width:1px;height:1px;background:#000"></div>
<div class="a n" style="left:681.2px;top:110px;font-size:10px;font-weight:bold;color:#000;transform:scaleX(.78)">11</div>
<div class="a" style="left:692.5px;top:114px;width:1px;height:1px;background:#000"></div>
<div class="a" style="left:699.0px;top:113px;width:1px;height:4px;background:#000"></div>
<div class="a" style="left:705.5px;top:114px;width:1px;height:1px;background:#000"></div>
<div class="a n" style="left:707.2px;top:110px;font-size:10px;font-weight:bold;color:#000;transform:scaleX(.78)">12</div>
<div class="a" style="left:718.5px;top:114px;width:1px;height:1px;background:#000"></div>
<div class="a" style="left:725.0px;top:113px;width:1px;height:4px;background:#000"></div>
<div class="a" style="left:731.5px;top:114px;width:1px;height:1px;background:#000"></div>
<div class="a n" style="left:733.2px;top:110px;font-size:10px;font-weight:bold;color:#000;transform:scaleX(.78)">13</div>
<div class="a" style="left:744.5px;top:114px;width:1px;height:1px;background:#000"></div>
<div class="a" style="left:751.0px;top:113px;width:1px;height:4px;background:#000"></div>
<div class="a" style="left:757.5px;top:114px;width:1px;height:1px;background:#000"></div>
<div class="a n" style="left:759.2px;top:110px;font-size:10px;font-weight:bold;color:#000;transform:scaleX(.78)">14</div>
<div class="a" style="left:770.5px;top:114px;width:1px;height:1px;background:#000"></div>
<div class="a" style="left:777.0px;top:113px;width:1px;height:4px;background:#000"></div>
<div class="a" style="left:783.5px;top:114px;width:1px;height:1px;background:#000"></div>
<div class="a n" style="left:785.2px;top:110px;font-size:10px;font-weight:bold;color:#000;transform:scaleX(.78)">15</div>
<div class="a" style="left:796.5px;top:114px;width:1px;height:1px;background:#000"></div>
<div class="a" style="left:803.0px;top:113px;width:1px;height:4px;background:#000"></div>
<div class="a" style="left:809.5px;top:114px;width:1px;height:1px;background:#000"></div>
<div class="a n" style="left:811.2px;top:110px;font-size:10px;font-weight:bold;color:#000;transform:scaleX(.78)">16</div>
<div class="a" style="left:822.5px;top:114px;width:1px;height:1px;background:#000"></div>
<div class="a" style="left:829.0px;top:113px;width:1px;height:4px;background:#000"></div>
<div class="a" style="left:835.5px;top:114px;width:1px;height:1px;background:#000"></div>

<div class="a" style="left:848.5px;top:114px;width:1px;height:1px;background:#000"></div>
<div class="a" style="left:855.0px;top:113px;width:1px;height:4px;background:#000"></div>
<div class="a" style="left:432.5px;top:124px;width:1px;height:3px;background:#A09E96"></div>
<div class="a" style="left:465.0px;top:124px;width:1px;height:3px;background:#A09E96"></div>
<div class="a" style="left:497.5px;top:124px;width:1px;height:3px;background:#A09E96"></div>
<div class="a" style="left:530.0px;top:124px;width:1px;height:3px;background:#A09E96"></div>
<div class="a" style="left:562.5px;top:124px;width:1px;height:3px;background:#A09E96"></div>
<div class="a" style="left:595.0px;top:124px;width:1px;height:3px;background:#A09E96"></div>
<div class="a" style="left:627.5px;top:124px;width:1px;height:3px;background:#A09E96"></div>
<div class="a" style="left:660.0px;top:124px;width:1px;height:3px;background:#A09E96"></div>
<div class="a" style="left:692.5px;top:124px;width:1px;height:3px;background:#A09E96"></div>
<div class="a" style="left:725.0px;top:124px;width:1px;height:3px;background:#A09E96"></div>
<div class="a" style="left:757.5px;top:124px;width:1px;height:3px;background:#A09E96"></div>
<div class="a" style="left:790.0px;top:124px;width:1px;height:3px;background:#A09E96"></div>
<div class="a" style="left:822.5px;top:124px;width:1px;height:3px;background:#A09E96"></div>
<svg style="left:395px;top:104px" width="50" height="25"><path d="M34.5 1.5H42.5V3L38.5 8L34.5 3Z" fill="#fff" stroke="#222"/><path d="M1.5 16.5V14L5.5 9.5L9.5 14V16.5Z" fill="#fff" stroke="#222"/><rect x="1.5" y="16.5" width="8" height="6" fill="#fff" stroke="#222"/></svg>
<svg style="left:838px;top:112px" width="12" height="10"><path d="M1.5 8.5V6L5.5 1.5L9.5 6V8.5Z" fill="#fff" stroke="#222"/></svg>
<div class="a" style="left:243px;top:106px;width:16px;height:17px;background:#F2F1EC;border:1px solid #8E8C86"></div>
<svg style="left:247px;top:110px" width="8" height="8"><path d="M1.5 0V6.5H7" stroke="#000" stroke-width="2.2" fill="none"/></svg>
<div class="a" style="left:242px;top:128px;width:20px;height:857px;background:#DAD7CD"></div>
<div class="a" style="left:245px;top:290px;width:13px;height:61px;background:#8C8C8C"></div>
<div class="a" style="left:245px;top:351px;width:13px;height:634px;background:#fff"></div>
<div class="a" style="left:250px;top:296.1px;width:1px;height:1px;background:#000"></div>
<div class="a" style="left:249px;top:303.9px;width:4px;height:1px;background:#000"></div>
<div class="a" style="left:250px;top:311.8px;width:1px;height:1px;background:#000"></div>
<div class="a n" style="left:247px;top:323.1px;font-size:9px;font-weight:bold;transform:rotate(-90deg) scaleX(.9)">1</div>
<div class="a" style="left:250px;top:327.4px;width:1px;height:1px;background:#000"></div>
<div class="a" style="left:249px;top:335.3px;width:4px;height:1px;background:#000"></div>
<div class="a" style="left:250px;top:343.1px;width:1px;height:1px;background:#000"></div>
<div class="a" style="left:250px;top:358.9px;width:1px;height:1px;background:#000"></div>
<div class="a" style="left:249px;top:366.7px;width:4px;height:1px;background:#000"></div>
<div class="a" style="left:250px;top:374.6px;width:1px;height:1px;background:#000"></div>
<div class="a n" style="left:247px;top:385.9px;font-size:9px;font-weight:bold;transform:rotate(-90deg) scaleX(.9)">1</div>
<div class="a" style="left:250px;top:390.2px;width:1px;height:1px;background:#000"></div>
<div class="a" style="left:249px;top:398.1px;width:4px;height:1px;background:#000"></div>
<div class="a" style="left:250px;top:405.9px;width:1px;height:1px;background:#000"></div>
<div class="a n" style="left:247px;top:417.3px;font-size:9px;font-weight:bold;transform:rotate(-90deg) scaleX(.9)">2</div>
<div class="a" style="left:250px;top:421.6px;width:1px;height:1px;background:#000"></div>
<div class="a" style="left:249px;top:429.5px;width:4px;height:1px;background:#000"></div>
<div class="a" style="left:250px;top:437.4px;width:1px;height:1px;background:#000"></div>
<div class="a n" style="left:247px;top:448.7px;font-size:9px;font-weight:bold;transform:rotate(-90deg) scaleX(.9)">3</div>
<div class="a" style="left:250px;top:453.1px;width:1px;height:1px;background:#000"></div>
<div class="a" style="left:249px;top:460.9px;width:4px;height:1px;background:#000"></div>
<div class="a" style="left:250px;top:468.8px;width:1px;height:1px;background:#000"></div>
<div class="a n" style="left:247px;top:480.1px;font-size:9px;font-weight:bold;transform:rotate(-90deg) scaleX(.9)">4</div>
<div class="a" style="left:250px;top:484.4px;width:1px;height:1px;background:#000"></div>
<div class="a" style="left:249px;top:492.3px;width:4px;height:1px;background:#000"></div>
<div class="a" style="left:250px;top:500.1px;width:1px;height:1px;background:#000"></div>
<div class="a n" style="left:247px;top:511.5px;font-size:9px;font-weight:bold;transform:rotate(-90deg) scaleX(.9)">5</div>
<div class="a" style="left:250px;top:515.9px;width:1px;height:1px;background:#000"></div>
<div class="a" style="left:249px;top:523.7px;width:4px;height:1px;background:#000"></div>
<div class="a" style="left:250px;top:531.5px;width:1px;height:1px;background:#000"></div>
<div class="a n" style="left:247px;top:542.9px;font-size:9px;font-weight:bold;transform:rotate(-90deg) scaleX(.9)">6</div>
<div class="a" style="left:250px;top:547.2px;width:1px;height:1px;background:#000"></div>
<div class="a" style="left:249px;top:555.1px;width:4px;height:1px;background:#000"></div>
<div class="a" style="left:250px;top:563.0px;width:1px;height:1px;background:#000"></div>
<div class="a n" style="left:247px;top:574.3px;font-size:9px;font-weight:bold;transform:rotate(-90deg) scaleX(.9)">7</div>
<div class="a" style="left:250px;top:578.6px;width:1px;height:1px;background:#000"></div>
<div class="a" style="left:249px;top:586.5px;width:4px;height:1px;background:#000"></div>
<div class="a" style="left:250px;top:594.4px;width:1px;height:1px;background:#000"></div>
<div class="a n" style="left:247px;top:605.7px;font-size:9px;font-weight:bold;transform:rotate(-90deg) scaleX(.9)">8</div>
<div class="a" style="left:250px;top:610.0px;width:1px;height:1px;background:#000"></div>
<div class="a" style="left:249px;top:617.9px;width:4px;height:1px;background:#000"></div>
<div class="a" style="left:250px;top:625.8px;width:1px;height:1px;background:#000"></div>
<div class="a n" style="left:247px;top:637.1px;font-size:9px;font-weight:bold;transform:rotate(-90deg) scaleX(.9)">9</div>
<div class="a" style="left:250px;top:641.5px;width:1px;height:1px;background:#000"></div>
<div class="a" style="left:249px;top:649.3px;width:4px;height:1px;background:#000"></div>
<div class="a" style="left:250px;top:657.1px;width:1px;height:1px;background:#000"></div>
<div class="a n" style="left:247px;top:671.0px;font-size:9px;font-weight:bold;transform:rotate(-90deg) scaleX(.9)">10</div>
<div class="a" style="left:250px;top:672.8px;width:1px;height:1px;background:#000"></div>
<div class="a" style="left:249px;top:680.7px;width:4px;height:1px;background:#000"></div>
<div class="a" style="left:250px;top:688.5px;width:1px;height:1px;background:#000"></div>
<div class="a n" style="left:247px;top:702.4px;font-size:9px;font-weight:bold;transform:rotate(-90deg) scaleX(.9)">11</div>
<div class="a" style="left:250px;top:704.2px;width:1px;height:1px;background:#000"></div>
<div class="a" style="left:249px;top:712.1px;width:4px;height:1px;background:#000"></div>
<div class="a" style="left:250px;top:720.0px;width:1px;height:1px;background:#000"></div>
<div class="a n" style="left:247px;top:733.8px;font-size:9px;font-weight:bold;transform:rotate(-90deg) scaleX(.9)">12</div>
<div class="a" style="left:250px;top:735.6px;width:1px;height:1px;background:#000"></div>
<div class="a" style="left:249px;top:743.5px;width:4px;height:1px;background:#000"></div>
<div class="a" style="left:250px;top:751.3px;width:1px;height:1px;background:#000"></div>
<div class="a n" style="left:247px;top:765.2px;font-size:9px;font-weight:bold;transform:rotate(-90deg) scaleX(.9)">13</div>
<div class="a" style="left:250px;top:767.0px;width:1px;height:1px;background:#000"></div>
<div class="a" style="left:249px;top:774.9px;width:4px;height:1px;background:#000"></div>
<div class="a" style="left:250px;top:782.8px;width:1px;height:1px;background:#000"></div>
<div class="a n" style="left:247px;top:796.6px;font-size:9px;font-weight:bold;transform:rotate(-90deg) scaleX(.9)">14</div>
<div class="a" style="left:250px;top:798.5px;width:1px;height:1px;background:#000"></div>
<div class="a" style="left:249px;top:806.3px;width:4px;height:1px;background:#000"></div>
<div class="a" style="left:250px;top:814.1px;width:1px;height:1px;background:#000"></div>
<div class="a n" style="left:247px;top:828.0px;font-size:9px;font-weight:bold;transform:rotate(-90deg) scaleX(.9)">15</div>
<div class="a" style="left:250px;top:829.8px;width:1px;height:1px;background:#000"></div>
<div class="a" style="left:249px;top:837.7px;width:4px;height:1px;background:#000"></div>
<div class="a" style="left:250px;top:845.5px;width:1px;height:1px;background:#000"></div>
<div class="a n" style="left:247px;top:859.4px;font-size:9px;font-weight:bold;transform:rotate(-90deg) scaleX(.9)">16</div>
<div class="a" style="left:250px;top:861.2px;width:1px;height:1px;background:#000"></div>
<div class="a" style="left:249px;top:869.1px;width:4px;height:1px;background:#000"></div>
<div class="a" style="left:250px;top:876.9px;width:1px;height:1px;background:#000"></div>
<div class="a n" style="left:247px;top:890.8px;font-size:9px;font-weight:bold;transform:rotate(-90deg) scaleX(.9)">17</div>
<div class="a" style="left:250px;top:892.6px;width:1px;height:1px;background:#000"></div>
<div class="a" style="left:249px;top:900.5px;width:4px;height:1px;background:#000"></div>
<div class="a" style="left:250px;top:908.4px;width:1px;height:1px;background:#000"></div>
<div class="a n" style="left:247px;top:922.2px;font-size:9px;font-weight:bold;transform:rotate(-90deg) scaleX(.9)">18</div>
<div class="a" style="left:250px;top:924.0px;width:1px;height:1px;background:#000"></div>
<div class="a" style="left:249px;top:931.9px;width:4px;height:1px;background:#000"></div>
<div class="a" style="left:250px;top:939.8px;width:1px;height:1px;background:#000"></div>
<div class="a n" style="left:247px;top:953.6px;font-size:9px;font-weight:bold;transform:rotate(-90deg) scaleX(.9)">19</div>
<div class="a" style="left:250px;top:955.4px;width:1px;height:1px;background:#000"></div>
<div class="a" style="left:249px;top:963.3px;width:4px;height:1px;background:#000"></div>
<div class="a" style="left:250px;top:971.1px;width:1px;height:1px;background:#000"></div>
<div class="a n" style="left:247px;top:985.0px;font-size:9px;font-weight:bold;transform:rotate(-90deg) scaleX(.9)">20</div>
<div class="a n" style="left:247px;top:291.7px;font-size:9px;font-weight:bold;transform:rotate(-90deg) scaleX(.9)">2</div>
<!-- v scrollbar -->
<div class="a" style="left:929px;top:103px;width:14px;height:882px;background:#F0EFEA"></div>
<div class="a" style="left:944px;top:103px;width:1px;height:898px;background:#fff"></div>
<div class="a" style="left:929px;top:103px;width:15px;height:16px;background:#E6E4DC;border-bottom:2px solid #6E6C66;border-right:2px solid #6E6C66"></div>
<svg style="left:931px;top:108px" width="9" height="6"><path d="M.5 5.5L4.5 .5L8.5 5.5Z" fill="#000"/></svg>
<div class="a" style="left:929px;top:198px;width:15px;height:15px;background:#DCD9D0;border-bottom:2px solid #6E6C66;border-right:2px solid #6E6C66"></div>
<div class="a" style="left:929px;top:917px;width:15px;height:17px;background:#E6E4DC;border-bottom:2px solid #6E6C66;border-right:2px solid #6E6C66"></div>
<svg style="left:931px;top:922px" width="9" height="6"><path d="M.5 .5L4.5 5.5L8.5 .5Z" fill="#000"/></svg>
<div class="a" style="left:929px;top:934px;width:15px;height:67px;background:#DCD9D0"></div>
<svg style="left:932px;top:937px" width="8" height="45"><path d="M1 5L4 2L7 5ZM1 8L4 5L7 8Z" fill="#000"/><circle cx="4" cy="22" r="2.5" fill="none" stroke="#000" stroke-width="1.2"/><path d="M1 37L4 40L7 37ZM1 40L4 43L7 40Z" fill="#000"/></svg>
<!-- h scrollbar row -->
<div class="a" style="left:242px;top:985px;width:687px;height:16px;background:#E4E2DA"></div>
<div class="a" style="left:324px;top:985px;width:604px;height:15px;background:#EDEBE5"></div>
<div class="a" style="left:242px;top:999px;width:687px;height:2px;background:#6E6C66"></div>
<svg style="left:246px;top:987px" width="70" height="12" shape-rendering="crispEdges"><path d="M0 2.5H7M0 4.5H7M0 6.5H7M0 8.5H7M0 10.5H7" stroke="#333" stroke-width="1"/><rect x="14" y="2" width="7" height="7" rx="2" fill="none" stroke="#333" stroke-width="1.3"/><circle cx="20" cy="9" r="2.5" fill="#2A3A8A"/><path d="M44 1H49M42 3H49M44 5H49M42 7H49M44 9H49" stroke="#444"/><path d="M56 1L59 2L62 1V9L59 10L56 9Z" fill="none" stroke="#000"/></svg>
<div class="a" style="left:269px;top:985px;width:15px;height:16px;background:#E1E6F6;border:1px solid #2A3A80"></div>
<svg style="left:272px;top:988px" width="9" height="10"><rect x=".5" y=".5" width="8" height="9" rx="1.5" fill="none" stroke="#333" stroke-width="1.2"/><path d="M2 4H7M2 6H7" stroke="#333"/></svg>
<svg style="left:316px;top:989px" width="6" height="9"><path d="M5.5 .5L.5 4.5L5.5 8.5Z" fill="#000"/></svg>
<div class="a" style="left:324px;top:985px;width:1px;height:16px;background:#6E6C66"></div>
<div class="a" style="left:914px;top:985px;width:15px;height:16px;background:#E6E4DC;border-left:1px solid #fff;border-right:2px solid #6E6C66;border-bottom:2px solid #6E6C66"></div>
<svg style="left:919px;top:989px" width="6" height="9"><path d="M.5 .5L5.5 4.5L.5 8.5Z" fill="#000"/></svg>


<!-- TASK PANE -->
<div class="a" style="left:945px;top:101px;width:181px;height:902px;background:#EFEEE9"></div>
<div class="a" style="left:945px;top:101px;width:1px;height:902px;background:#fff"></div>
<div class="a" style="left:946px;top:102px;width:180px;height:1px;background:#fff"></div>
<div class="a" style="left:1122px;top:101px;width:1px;height:902px;background:#D4D1C8"></div>
<div class="a" style="left:948px;top:103px;width:174px;height:27px;background:linear-gradient(#F6F5F1,#EDEBE4)"></div>
<div class="a grip" style="left:950px;top:108px;height:15px"></div>
<div class="a n" style="left:955px;top:112px;font-size:12px;font-weight:bold;transform:scaleX(.82)">Стили и форматирование</div>
<div class="a dd" style="left:1099px;top:115px;border-left-width:4px;border-right-width:4px;border-top-width:5px"></div>
<svg style="left:1112px;top:113px" width="10" height="10"><path d="M1 1L9 9M9 1L1 9" stroke="#000" stroke-width="1.6"/></svg>
<div class="a" style="left:948px;top:130px;width:75px;height:9px;background:#9A9A96;border-radius:2px 2px 0 0"></div>
<div class="a" style="left:1011px;top:133px;width:5px;height:5px;background:#B8A050"></div>
<div class="a" style="left:953px;top:185px;width:165px;height:1px;background:#A8A69E"></div>
<div class="a" style="left:953px;top:186px;width:165px;height:1px;background:#fff"></div>
<div class="a" style="left:960px;top:193px;width:158px;height:39px;background:#fff;border:2px solid #2A2A2A"></div>
<div class="a n ser" style="left:991px;top:203px;font-size:19px;transform:scaleX(.89)">Обычный</div>
<div class="a" style="left:961px;top:236px;width:78px;height:24px;background:#D9D6CD;border:1px solid;border-color:#C8C5BC #A8A59C #A8A59C #C8C5BC"></div>
<div class="a n" style="left:968px;top:242px;font-size:12px;transform:scaleX(.80)">Выделить все</div>
<div class="a" style="left:961px;top:267px;width:92px;height:24px;background:#D9D6CD;border:1px solid;border-color:#C8C5BC #A8A59C #A8A59C #C8C5BC"></div>
<div class="a n" style="left:968px;top:273px;font-size:12px;transform:scaleX(.84)">Создать стиль...</div>
<div class="a n" style="left:952px;top:301px;font-size:12px;font-weight:bold;transform:scaleX(.85)">Выберите форматирование для</div>
<div class="a n" style="left:952px;top:315px;font-size:12px;font-weight:bold;transform:scaleX(.85)">применения</div>
<div class="a" style="left:953px;top:327px;width:165px;height:1px;background:#A8A69E"></div>
<div class="a" style="left:953px;top:328px;width:165px;height:1px;background:#fff"></div>
<!-- style list -->
<div class="a" style="left:961px;top:335px;width:157px;height:600px;background:#fff;border:2px solid #2A2A2A"></div>
<div class="a" style="left:1103px;top:337px;width:13px;height:596px;background:#E9E7E0"></div>
<div class="a" style="left:1103px;top:338px;width:13px;height:15px;background:#DEDBD2;border-right:2px solid #6E6C66;border-bottom:2px solid #6E6C66"></div>
<svg style="left:1105px;top:342px" width="8" height="5"><path d="M.5 4.5L4 .5L7.5 4.5Z" fill="#000"/></svg>
<div class="a" style="left:1103px;top:472px;width:13px;height:98px;background:#D8D5CC;border-right:2px solid #6E6C66;border-bottom:2px solid #6E6C66"></div>
<div class="a" style="left:1103px;top:915px;width:13px;height:17px;background:#DEDBD2;border-right:2px solid #6E6C66;border-bottom:2px solid #6E6C66"></div>
<svg style="left:1105px;top:921px" width="8" height="5"><path d="M.5 .5L4 4.5L7.5 .5Z" fill="#000"/></svg>
<div class="a" style="left:963px;top:338px;width:126px;height:595px;overflow:hidden">
<div class="a n ser" style="left:6px;top:7px;font-size:18px;color:#1010D8;text-decoration:underline;transform:scaleX(.935)">Гиперссылка</div>
<div class="a n ser" style="left:33px;top:42px;font-size:18px">ДипОбычный</div>
<div class="a n ser" style="left:36px;top:77px;font-size:18px;transform:scaleX(.80)">Д<span style="font-size:14px">ИПО</span><span style="font-size:14px;letter-spacing:-1px">ГЛАВЛЕНИЕ</span></div>
<div class="a n ser" style="left:32px;top:112px;font-size:18px;font-weight:bold">ДипПодраздел</div>
<div class="a n ser" style="left:53px;top:147px;font-size:18px;font-weight:bold">ДипРазд</div>
<div class="a n ser" style="left:18px;top:185px;font-size:15px;transform:scaleX(.915)">Для всего текста</div>
<div class="a n ser" style="left:28px;top:218px;font-size:16px;font-weight:bold;letter-spacing:1.5px">заголовок 1</div>
<div class="a n" style="left:27px;top:251px;font-size:19px;font-weight:bold;transform:scaleX(1.0)">Заголовок 1</div>
<div class="a n" style="left:27px;top:288px;font-size:15px;font-weight:bold;font-style:italic;transform:scaleX(1.04)">заголовок 2</div>
<div class="a n" style="left:27px;top:321px;font-size:19px;font-weight:bold;font-style:italic;transform:scaleX(1.0)">Заголовок 2</div>
<div class="a n ser" style="left:27px;top:360px;font-size:14px;font-weight:bold;letter-spacing:1px">заголовок 3</div>
<div class="a n" style="left:28px;top:392px;font-size:18px;transform:scaleX(.97)">Заголовок 3</div>
<div class="a n" style="left:27px;top:429px;font-size:15px;font-weight:bold;letter-spacing:.6px;transform:scaleX(1.0)">0&nbsp; заголовок 4</div>
<div class="a n ser" style="left:27px;top:461px;font-size:19px;font-weight:bold;letter-spacing:.5px">Заголовок 4</div>
<div class="a n" style="left:27px;top:499px;font-size:15px;letter-spacing:.2px;transform:scaleX(1.0)">0&nbsp; заголовок 5</div>
<div class="a n ser" style="left:27px;top:531px;font-size:17px;font-weight:bold;font-style:italic">Заголовок 5</div>
<div class="a n" style="left:28px;top:568px;font-size:15px;font-style:italic;letter-spacing:0;transform:scaleX(.95)">0&nbsp; заголовок 6</div>
</div>
<div class="a n" style="left:1093px;top:350px;font-size:12px;font-weight:bold;text-decoration:underline">a</div>
<div class="a" style="left:1094px;top:384px;width:6px;height:10px"><svg width="6" height="10" style="left:0;top:0"><path d="M3 .5H5.5V9.5M4 .5V9.5M3 .5A2.2 2.5 0 0 0 3 5.5H4" stroke="#000" fill="#000" stroke-width="1.2"/></svg></div><div class="a" style="left:1094px;top:419px;width:6px;height:10px"><svg width="6" height="10" style="left:0;top:0"><path d="M3 .5H5.5V9.5M4 .5V9.5M3 .5A2.2 2.5 0 0 0 3 5.5H4" stroke="#000" fill="#000" stroke-width="1.2"/></svg></div><div class="a" style="left:1094px;top:454px;width:6px;height:10px"><svg width="6" height="10" style="left:0;top:0"><path d="M3 .5H5.5V9.5M4 .5V9.5M3 .5A2.2 2.5 0 0 0 3 5.5H4" stroke="#000" fill="#000" stroke-width="1.2"/></svg></div><div class="a" style="left:1094px;top:489px;width:6px;height:10px"><svg width="6" height="10" style="left:0;top:0"><path d="M3 .5H5.5V9.5M4 .5V9.5M3 .5A2.2 2.5 0 0 0 3 5.5H4" stroke="#000" fill="#000" stroke-width="1.2"/></svg></div><div class="a" style="left:1094px;top:525px;width:6px;height:10px"><svg width="6" height="10" style="left:0;top:0"><path d="M3 .5H5.5V9.5M4 .5V9.5M3 .5A2.2 2.5 0 0 0 3 5.5H4" stroke="#000" fill="#000" stroke-width="1.2"/></svg></div><div class="a" style="left:1094px;top:559px;width:6px;height:10px"><svg width="6" height="10" style="left:0;top:0"><path d="M3 .5H5.5V9.5M4 .5V9.5M3 .5A2.2 2.5 0 0 0 3 5.5H4" stroke="#000" fill="#000" stroke-width="1.2"/></svg></div><div class="a" style="left:1094px;top:594px;width:6px;height:10px"><svg width="6" height="10" style="left:0;top:0"><path d="M3 .5H5.5V9.5M4 .5V9.5M3 .5A2.2 2.5 0 0 0 3 5.5H4" stroke="#000" fill="#000" stroke-width="1.2"/></svg></div><div class="a" style="left:1094px;top:629px;width:6px;height:10px"><svg width="6" height="10" style="left:0;top:0"><path d="M3 .5H5.5V9.5M4 .5V9.5M3 .5A2.2 2.5 0 0 0 3 5.5H4" stroke="#000" fill="#000" stroke-width="1.2"/></svg></div><div class="a" style="left:1094px;top:664px;width:6px;height:10px"><svg width="6" height="10" style="left:0;top:0"><path d="M3 .5H5.5V9.5M4 .5V9.5M3 .5A2.2 2.5 0 0 0 3 5.5H4" stroke="#000" fill="#000" stroke-width="1.2"/></svg></div><div class="a" style="left:1094px;top:700px;width:6px;height:10px"><svg width="6" height="10" style="left:0;top:0"><path d="M3 .5H5.5V9.5M4 .5V9.5M3 .5A2.2 2.5 0 0 0 3 5.5H4" stroke="#000" fill="#000" stroke-width="1.2"/></svg></div><div class="a" style="left:1094px;top:735px;width:6px;height:10px"><svg width="6" height="10" style="left:0;top:0"><path d="M3 .5H5.5V9.5M4 .5V9.5M3 .5A2.2 2.5 0 0 0 3 5.5H4" stroke="#000" fill="#000" stroke-width="1.2"/></svg></div><div class="a" style="left:1094px;top:769px;width:6px;height:10px"><svg width="6" height="10" style="left:0;top:0"><path d="M3 .5H5.5V9.5M4 .5V9.5M3 .5A2.2 2.5 0 0 0 3 5.5H4" stroke="#000" fill="#000" stroke-width="1.2"/></svg></div><div class="a" style="left:1094px;top:804px;width:6px;height:10px"><svg width="6" height="10" style="left:0;top:0"><path d="M3 .5H5.5V9.5M4 .5V9.5M3 .5A2.2 2.5 0 0 0 3 5.5H4" stroke="#000" fill="#000" stroke-width="1.2"/></svg></div><div class="a" style="left:1094px;top:840px;width:6px;height:10px"><svg width="6" height="10" style="left:0;top:0"><path d="M3 .5H5.5V9.5M4 .5V9.5M3 .5A2.2 2.5 0 0 0 3 5.5H4" stroke="#000" fill="#000" stroke-width="1.2"/></svg></div><div class="a" style="left:1094px;top:874px;width:6px;height:10px"><svg width="6" height="10" style="left:0;top:0"><path d="M3 .5H5.5V9.5M4 .5V9.5M3 .5A2.2 2.5 0 0 0 3 5.5H4" stroke="#000" fill="#000" stroke-width="1.2"/></svg></div><div class="a" style="left:1094px;top:909px;width:6px;height:10px"><svg width="6" height="10" style="left:0;top:0"><path d="M3 .5H5.5V9.5M4 .5V9.5M3 .5A2.2 2.5 0 0 0 3 5.5H4" stroke="#000" fill="#000" stroke-width="1.2"/></svg></div>
<div class="a n" style="left:960px;top:971px;font-size:12px;transform:scaleX(.86)">Показать:</div>
<div class="a" style="left:1014px;top:965px;width:104px;height:24px;background:#fff;border:1px solid #7F9DB9;border-color:#A5A39B"></div>
<div class="a n" style="left:1017px;top:971px;font-size:12px;transform:scaleX(.86)">Доступное</div>
<div class="a" style="left:1103px;top:966px;width:14px;height:22px;background:#DCD9D0"></div>
<svg style="left:1106px;top:974px" width="8" height="5"><path d="M.5 .5L4 4.5L7.5 .5Z" fill="#000"/></svg>
<div class="a" style="left:945px;top:1001px;width:181px;height:2px;background:#D4D1C8"></div>

<!-- FLOATING PICTURE TOOLBAR -->
<div class="a" style="left:814px;top:138px;width:304px;height:45px;background:#6E6E6E"></div>
<div class="a" style="left:816px;top:140px;width:300px;height:15px;background:#858585"></div>
<div class="a n" style="left:818px;top:142px;font-size:12px;font-weight:bold;color:#fff;transform:scaleX(.87)">Настройка изображения</div>
<svg style="left:1090px;top:144px" width="9" height="6"><path d="M.5 .5H8.5L4.5 5.5Z" fill="#fff"/></svg>
<svg style="left:1105px;top:143px" width="9" height="9"><path d="M1 1L8 8M8 1L1 8" stroke="#fff" stroke-width="1.5"/></svg>
<div class="a" style="left:816px;top:155px;width:300px;height:26px;background:linear-gradient(#FBFAF7,#ECEAE3)"></div>
<svg style="left:819px;top:160px" width="300" height="17">
<rect x="1.5" y=".5" width="12" height="15" fill="#C8DCF4" stroke="#2A3A90"/><path d="M2 14L6 8L9 11L13 6V15H2Z" fill="#5A8AD0"/><circle cx="8" cy="5" r="2" fill="#E89040"/>
<path d="M19.5 0V16" stroke="#C8C5BA"/>
<rect x="26" y=".5" width="6" height="15" fill="#303030"/><rect x="33" y=".5" width="6" height="15" fill="#404040"/><rect x="27" y="2" width="4" height="5" fill="#fff"/><rect x="34" y="2" width="4" height="5" fill="#D0D0D0"/>
<circle cx="50" cy="8" r="5.5" fill="#C8C8C8" stroke="#A0A0A0"/><path d="M50 2.5A5.5 5.5 0 0 1 50 13.5Z" fill="#909090"/><path d="M57 2V14M55 4L57 2L59 4" stroke="#888" fill="none"/>
<circle cx="70" cy="8" r="5.5" fill="#B8B8B8" stroke="#A0A0A0"/><path d="M77 2V14M75 12L77 14L79 12" stroke="#888" fill="none"/>
<path d="M89 2L93 14M93 2L89 14M85 8H97M86 4L96 12M96 4L86 12" stroke="#A8A8A8"/><path d="M98 2V14M96 4L98 2L100 4" stroke="#888" fill="none"/>
<circle cx="110" cy="8" r="3" fill="#C0C0C0"/><path d="M110 2V14M104 8H116M106 4L114 12M114 4L106 12" stroke="#B0B0B0"/><path d="M118 2V14M116 12L118 14L120 12" stroke="#888" fill="none"/>
<path d="M126.5 0V16" stroke="#C8C5BA"/>
<path d="M133 10H138V4H143M138 0V16" stroke="#909090" stroke-width="1.5" fill="none"/>
<path d="M152 15L158 2V15ZM160 4L165 10" stroke="#B0B0B0" fill="#C0C0C0"/>
<rect x="172" y="4" width="13" height="3" fill="#000"/><rect x="172" y="9" width="13" height="3" fill="#000"/>
<rect x="193.5" y="2.5" width="12" height="12" fill="#F8F0EC" stroke="#9AB0D8"/><path d="M192 1L197 6M207 1L202 6M192 16L197 11M207 16L202 11" stroke="#1A3AA8" stroke-width="1.6"/><path d="M197 13L199 7Q201 4 203 7L204 13Z" fill="#D89050"/><circle cx="200" cy="6" r="1.6" fill="#E0A070"/>
<rect x="213.5" y="1.5" width="13" height="14" fill="#DCE4F4" stroke="#3A4A78" stroke-width="1.3"/><path d="M220 4H225M220 7H225M220 10H225M220 13H225" stroke="#9AB0D8"/><path d="M216 5L223 12M222 5Q219 9 216 12M216 12L218 13M222 5L224 4" stroke="#000" stroke-width="2.3"/>
<path d="M234 4Q240 0 246 8L242 15L236 12Z" fill="#C8C8C8" stroke="#B0B0B0"/>
<path d="M254 15L266 3M254 15V9M254 15H260" stroke="#B0B0B0" stroke-width="1.6" fill="none"/>
<path d="M272.5 0V16" stroke="#C8C5BA"/>
<rect x="284" y="6" width="10" height="10" fill="#C0C0C0"/><path d="M280 8L284 2L288 6" stroke="#A0A0A0" stroke-width="2" fill="none"/>
</svg>
<!-- DRAWING TOOLBAR -->
<div class="a" style="left:0;top:1001px;width:1126px;height:2px;background:#F6F5F1"></div>
<div class="a" style="left:0;top:1003px;width:1126px;height:29px;background:linear-gradient(90deg,#E8E6DE 0%,#F5F4EF 40%,#FAF9F6 100%)"></div>
<div class="a" style="left:0;top:1003px;width:555px;height:28px;background:linear-gradient(#FBFAF7,#ECEAE2)"></div>
<div class="a grip" style="left:5px;top:1010px;height:15px"></div>
<div class="a n" style="left:11px;top:1013px;transform:scaleX(.86)"><u>Р</u>исование</div>
<div class="a dd" style="left:60px;top:1017px"></div>
<svg style="left:73px;top:1009px" width="12" height="17"><path d="M1 1V13L4 10L7 16L9 15L6 9H10Z" fill="#fff" stroke="#5A7AB0"/></svg>
<div class="a vsep" style="left:91px;top:1009px;height:17px"></div>
<div class="a n" style="left:97px;top:1013px;transform:scaleX(.86)">Автофи<u>г</u>уры</div>
<div class="a dd" style="left:155px;top:1017px"></div>
<svg style="left:168px;top:1008px" width="390" height="20">
<path d="M3 3L12 14" stroke="#222" stroke-width="1.3"/>
<path d="M25 3L33 13" stroke="#222" stroke-width="1.5"/><path d="M35 16L29 14L34 10Z" fill="#222"/>
<rect x="40.5" y="3.5" width="14" height="12" fill="none" stroke="#333" stroke-width="1.3"/>
<ellipse cx="67" cy="9.5" rx="7.5" ry="6" fill="none" stroke="#333" stroke-width="1.3"/>
<rect x="81.5" y="2.5" width="13" height="14" fill="#fff" stroke="#5A7AB0"/><path d="M84 13H92M84 10H92M84 7H88" stroke="#5A7AB0"/><text x="83" y="8" font-size="7" font-family="Liberation Sans" fill="#222">A</text>
<path d="M100 15L110 1L114 17Z" fill="#3A6AE0"/><path d="M103 12H113" stroke="#1A3AA0" stroke-width="2"/>
<circle cx="127" cy="3" r="1.8" fill="#C05050"/><circle cx="133" cy="8" r="1.8" fill="#C05050"/><circle cx="131" cy="15" r="1.8" fill="#4A6AC0"/><circle cx="123" cy="16" r="1.8" fill="#B060B0"/><circle cx="120" cy="9" r="1.8" fill="#E09030"/><circle cx="124" cy="9" r="6" fill="none" stroke="#8090C0" stroke-dasharray="2 2"/>
<rect x="142.5" y="2.5" width="13" height="15" fill="#E8E4F0" stroke="#6A7AB0"/><circle cx="149" cy="8" r="3" fill="#707070"/><path d="M144 17Q149 10 154 17" fill="#E06020"/>
<rect x="162.5" y="2.5" width="13" height="15" fill="#D8E4F4" stroke="#6A7AB0"/><path d="M163 16L167 10L170 13L175 8V17H163Z" fill="#6A9AD0"/><circle cx="172" cy="6" r="2" fill="#E8A040"/>
<path d="M181.5 2V18" stroke="#C8C5BA"/>
<path d="M189 8L195 3L200 8L195 13Z" fill="#fff" stroke="#333"/><rect x="187" y="14" width="13" height="4" fill="#F0F000"/>
<path d="M229 3L221 11L219 13" stroke="#3A5AC0" stroke-width="2.5"/><rect x="216" y="14" width="14" height="4" fill="#fff" stroke="#999" stroke-width=".5"/>
<text x="249" y="13" font-size="15" font-family="Liberation Serif" fill="#2A3AA0">A</text><rect x="247" y="14" width="14" height="4" fill="#000"/>
<rect x="276" y="5" width="14" height="2" fill="#000"/><rect x="276" y="9" width="14" height="3" fill="#000"/><rect x="276" y="14" width="14" height="2" fill="#000"/>
<path d="M297 5H311M297 9H311M297 13H311" stroke="#333" stroke-dasharray="2 1"/>
<path d="M318 5H331M327 2L331 5L327 8M332 13H319M323 10L319 13L323 16" stroke="#000" stroke-width="1.5" fill="none"/>
<rect x="339" y="3" width="10" height="12" fill="#50B050" stroke="#2A6A2A"/><rect x="341" y="5" width="10" height="12" fill="none" stroke="#7A7A7A" opacity=".4"/>
<path d="M359 6L363 3H372V14L368 17H359Z" fill="#60C060" stroke="#2A6A2A"/><path d="M359 6H368V17M368 6L372 3" stroke="#2A6A2A" fill="none"/>
</svg>
<div class="a dd" style="left:374px;top:1017px"></div>
<div class="a dd" style="left:404px;top:1017px"></div>
<div class="a dd" style="left:434px;top:1017px"></div>
<div class="a chev" style="left:544px;top:1004px;width:10px;height:27px"></div>
<svg style="left:545px;top:1020px" width="9" height="9"><rect x="1.5" y="0" width="5" height="1" fill="#fff"/><path d="M1 2H7L4 6Z" fill="#000"/></svg>
<!-- STATUS BAR -->
<div class="a" style="left:0;top:1032px;width:1126px;height:1px;background:#C9C6BC"></div>
<div class="a" style="left:0;top:1033px;width:1126px;height:25px;background:#DAD6CB"></div>
<div class="a" style="left:0;top:1033px;width:1126px;height:1px;background:#F8F7F3"></div>
<div class="a" style="left:0;top:1056px;width:1126px;height:2px;background:#F3F2EE"></div>
<div class="a n" style="left:9px;top:1039px;font-size:12px;transform:scaleX(.86)">Стр.&nbsp; 9</div>
<div class="a n" style="left:68px;top:1039px;font-size:12px;transform:scaleX(.86)">Разд&nbsp; 1</div>
<div class="a n" style="left:140px;top:1039px;font-size:12px;transform:scaleX(.86)">6/53</div>
<div class="a n" style="left:182px;top:1039px;font-size:12px;transform:scaleX(.86)">На&nbsp; 15,7см</div><div class="a n" style="left:236px;top:1039px;font-size:12px;transform:scaleX(.86)">Ст&nbsp; 4</div>
<div class="a n" style="left:275px;top:1039px;font-size:12px;transform:scaleX(.86)">Кол&nbsp; 1</div>
<div class="a n" style="left:333px;top:1039px;font-size:12px;color:#8E8C86;transform:scaleX(.86)">ЗАП</div>
<div class="a n" style="left:358px;top:1039px;font-size:12px;color:#8E8C86;transform:scaleX(.86)">ИСПР</div>
<div class="a n" style="left:391px;top:1039px;font-size:12px;color:#8E8C86;transform:scaleX(.86)">ВДЛ</div>
<div class="a n" style="left:419px;top:1039px;font-size:12px;color:#8E8C86;transform:scaleX(.86)">ЗАМ</div>
<div class="a n" style="left:447px;top:1039px;font-size:12px;transform:scaleX(.86)">русский (Ро</div>
<svg style="left:517px;top:1037px" width="22" height="16"><path d="M2 3H9V13H2ZM4 1V3M7 1V3" stroke="#333" fill="#fff"/><path d="M10 4V12Q13 13 16 12V4" stroke="#333" fill="none"/><path d="M12 4L20 13M20 4L12 13" stroke="#E02020" stroke-width="2"/></svg>

</body></html>
